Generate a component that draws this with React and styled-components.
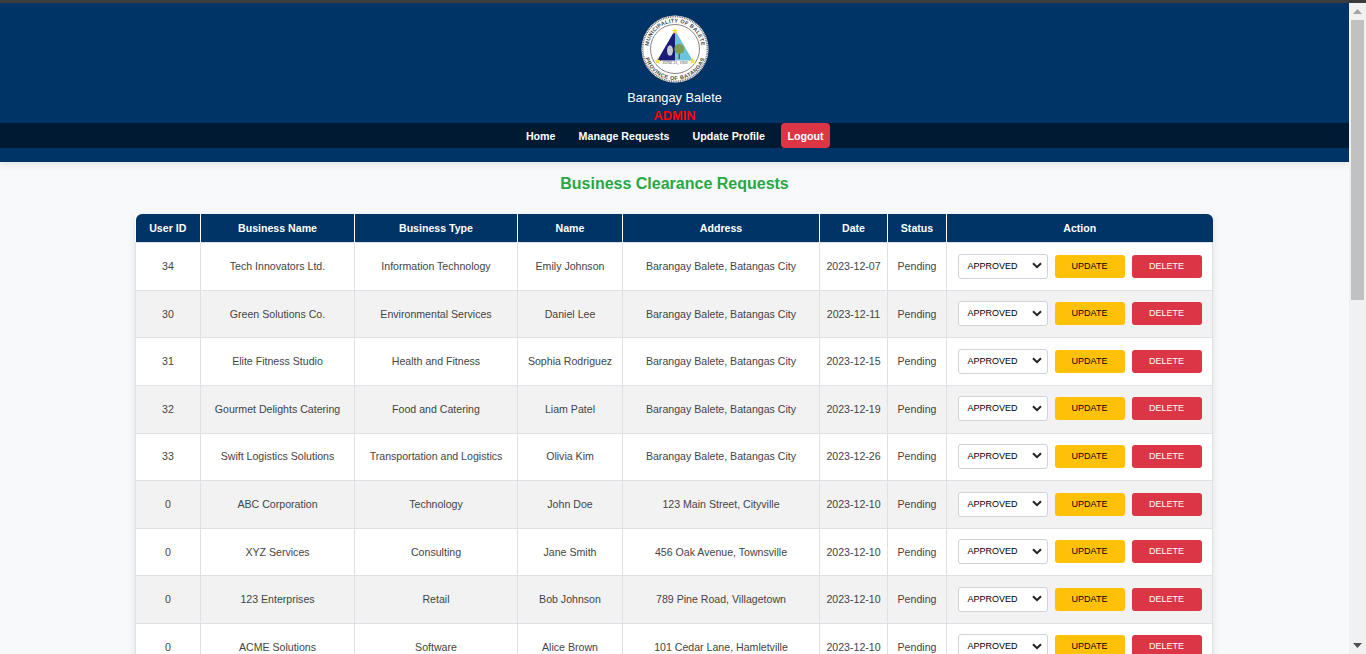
import React from "react";
import styled, { createGlobalStyle } from "styled-components";

const GlobalStyle = createGlobalStyle`
  html, body {
    margin: 0;
    height: 100%;
    overflow: hidden;
    background: #f8f9fa;
    font-family: "Liberation Sans", Arial, sans-serif;
  }
  * { box-sizing: border-box; }
`;

const Shell = styled.div`
  height: 654px;
  display: flex;
  flex-direction: column;
`;

const BrowserLine = styled.div`
  height: 3px;
  flex: none;
  background: #3c3c3c;
`;

const Viewport = styled.div`
  flex: 1;
  display: flex;
  min-height: 0;
`;

const Page = styled.div`
  flex: 1;
  min-width: 0;
  overflow: hidden;
`;

const ScrollTrack = styled.div`
  width: 17px;
  flex: none;
  background: #f1f1f1;
  display: flex;
  flex-direction: column;
  align-items: center;
`;

const ScrollArrow = styled.div`
  height: 17px;
  flex: none;
  display: flex;
  align-items: center;
  justify-content: center;
  margin-top: ${(p) => (p.$end ? "auto" : "0")};
`;

const ScrollThumb = styled.div`
  width: 13px;
  height: 280px;
  background: #c1c1c1;
`;

const Header = styled.header`
  background: #003366;
  height: 159px;
  padding-top: 12px;
  text-align: center;
  color: #fff;
  box-shadow: 0 2px 8px rgba(0, 0, 0, 0.1);
`;

const LogoWrap = styled.div`
  height: 68px;
  display: flex;
  justify-content: center;
`;

const TownName = styled.div`
  margin-top: 7px;
  font-size: 12.8px;
  line-height: 16px;
`;

const RoleName = styled.div`
  margin-top: 3px;
  font-size: 12.8px;
  line-height: 14px;
  font-weight: 700;
  color: #ff0000;
`;

const Nav = styled.nav`
  height: 25px;
  background: #001a33;
  display: flex;
  justify-content: center;
  align-items: center;
  gap: 23px;
  padding-left: 7px;
`;

const NavLink = styled.a`
  font-size: 10.7px;
  font-weight: 700;
  color: #fff;
  text-decoration: none;
`;

const LogoutLink = styled(NavLink)`
  background: #dc3545;
  height: 25px;
  line-height: 26px;
  padding: 0 6.5px;
  border-radius: 4px;
  margin-left: -7px;
`;

const Main = styled.main`
  padding: 0 135px;
`;

const Title = styled.h2`
  margin: 13px 0 21px;
  font-size: 16px;
  line-height: 18px;
  font-weight: 700;
  color: #28a745;
  text-align: center;
`;

const Table = styled.table`
  width: 1077px;
  border-collapse: collapse;
  table-layout: fixed;
  background: #fff;
  font-size: 10.6px;
  color: #444;
  box-shadow: 0 2px 8px rgba(0, 0, 0, 0.1);
`;

const Th = styled.th`
  height: 28.8px;
  padding: 0;
  background: #003366;
  color: #fff;
  font-size: 10.6px;
  font-weight: 700;
  text-align: center;
  border-left: 1px solid #fff;
  &:first-child { border-left: 0; border-top-left-radius: 6px; }
  &:last-child { border-top-right-radius: 6px; }
`;

const Row = styled.tr`
  height: 47.6px;
  background: ${(p) => (p.$odd ? "#f2f2f2" : "#fff")};
`;

const Td = styled.td`
  padding: 0 0 1px;
  text-align: center;
  border: 1px solid #dee2e6;
`;

const Actions = styled.div`
  display: flex;
  align-items: center;
  justify-content: center;
  gap: 7px;
`;

const StatusSelect = styled.div`
  width: 90px;
  height: 25px;
  background: #fff;
  border: 1px solid #ced4da;
  border-radius: 3px;
  padding: 0 5px 1px 9px;
  display: flex;
  align-items: center;
  justify-content: space-between;
  font-size: 9px;
  color: #000;
`;

const ActionButton = styled.button`
  width: 70px;
  height: 23px;
  padding: 0 0 1px;
  border: 0;
  border-radius: 3px;
  font-family: inherit;
  font-size: 9px;
  background: ${(p) => (p.$danger ? "#dc3545" : "#ffc107")};
  color: ${(p) => (p.$danger ? "#fff" : "#000")};
`;

const requests = [
  [34, "Tech Innovators Ltd.", "Information Technology", "Emily Johnson", "Barangay Balete, Batangas City", "2023-12-07"],
  [30, "Green Solutions Co.", "Environmental Services", "Daniel Lee", "Barangay Balete, Batangas City", "2023-12-11"],
  [31, "Elite Fitness Studio", "Health and Fitness", "Sophia Rodriguez", "Barangay Balete, Batangas City", "2023-12-15"],
  [32, "Gourmet Delights Catering", "Food and Catering", "Liam Patel", "Barangay Balete, Batangas City", "2023-12-19"],
  [33, "Swift Logistics Solutions", "Transportation and Logistics", "Olivia Kim", "Barangay Balete, Batangas City", "2023-12-26"],
  [0, "ABC Corporation", "Technology", "John Doe", "123 Main Street, Cityville", "2023-12-10"],
  [0, "XYZ Services", "Consulting", "Jane Smith", "456 Oak Avenue, Townsville", "2023-12-10"],
  [0, "123 Enterprises", "Retail", "Bob Johnson", "789 Pine Road, Villagetown", "2023-12-10"],
  [0, "ACME Solutions", "Software", "Alice Brown", "101 Cedar Lane, Hamletville", "2023-12-10"],
];

const columns = [
  ["User ID", 65],
  ["Business Name", 154],
  ["Business Type", 163],
  ["Name", 105],
  ["Address", 197],
  ["Date", 68],
  ["Status", 59],
  ["Action", 266],
];

function Seal() {
  return (
    <svg width="68" height="68" viewBox="0 0 68 68">
      <defs>
        <path id="sealTop" d="M34 60.5a26.5 26.5 0 1 1 0-53a26.5 26.5 0 1 1 0 53" />
        <path id="sealBottom" d="M34 3a31 31 0 0 0 0 62a31 31 0 0 0 0-62" />
      </defs>
      <circle cx="34" cy="34" r="33.5" fill="#fff" />
      <circle cx="34" cy="34" r="32.5" fill="none" stroke="#777" strokeWidth="2" strokeDasharray="1 0.8" />
      <circle cx="34" cy="34" r="24.5" fill="#fff" stroke="#666" strokeWidth="0.8" />
      <text fontSize="5.4" fontFamily="Liberation Sans" fontWeight="700" fill="#444" letterSpacing="0.3">
        <textPath href="#sealTop" startOffset="50%" textAnchor="middle">MUNICIPALITY OF BALETE</textPath>
      </text>
      <text fontSize="5.4" fontFamily="Liberation Sans" fontWeight="700" fill="#444" letterSpacing="0.5">
        <textPath href="#sealBottom" startOffset="50%" textAnchor="middle">PROVINCE OF BATANGAS</textPath>
      </text>
      <path d="M34 15 16 46h18z" fill="#1b1b78" />
      <path d="M34 15 52 46H34z" fill="#6cc4dc" />
      <ellipse cx="29" cy="35.5" rx="3" ry="5.2" fill="#c9c9d8" />
      <rect x="37.6" y="36" width="1.4" height="8" fill="#6b5a35" />
      <circle cx="38.3" cy="34" r="5" fill="#7d9c55" />
      <rect x="20" y="45.5" width="28" height="4" fill="#fff" />
      <text x="34" y="48.8" fontSize="4" fontFamily="Liberation Serif" fill="#333" textAnchor="middle">JUNE 21, 1969</text>
      <path d="M34 12.5l1 2.4 2.5.1-2 1.6.7 2.5-2.2-1.4-2.2 1.4.7-2.5-2-1.6 2.5-.1zM16.5 42.5l1 2.4 2.5.1-2 1.6.7 2.5-2.2-1.4-2.2 1.4.7-2.5-2-1.6 2.5-.1zM51.5 42.5l1 2.4 2.5.1-2 1.6.7 2.5-2.2-1.4-2.2 1.4.7-2.5-2-1.6 2.5-.1z" fill="#f4e04d" />
    </svg>
  );
}

export default function App() {
  return (
    <Shell>
      <GlobalStyle />
      <BrowserLine />
      <Viewport>
        <Page>
          <Header>
            <LogoWrap>
              <Seal />
            </LogoWrap>
            <TownName>Barangay Balete</TownName>
            <RoleName>ADMIN</RoleName>
            <Nav>
              <NavLink href="#">Home</NavLink>
              <NavLink href="#">Manage Requests</NavLink>
              <NavLink href="#">Update Profile</NavLink>
              <LogoutLink href="#">Logout</LogoutLink>
            </Nav>
          </Header>
          <Main>
            <Title>Business Clearance Requests</Title>
            <Table>
              <colgroup>
                {columns.map(([label, width]) => (
                  <col key={label} width={width} />
                ))}
              </colgroup>
              <thead>
                <tr>
                  {columns.map(([label]) => (
                    <Th key={label}>{label}</Th>
                  ))}
                </tr>
              </thead>
              <tbody>
                {requests.map((r, i) => (
                  <Row key={r[1]} $odd={i % 2 === 1}>
                    {r.map((v, j) => (
                      <Td key={j}>{v}</Td>
                    ))}
                    <Td>Pending</Td>
                    <Td>
                      <Actions>
                        <StatusSelect>
                          APPROVED
                          <svg width="10" height="7" viewBox="0 0 10 7">
                            <path d="M1 1.2 5 5.2 9 1.2" fill="none" stroke="#222" strokeWidth="2" />
                          </svg>
                        </StatusSelect>
                        <ActionButton>UPDATE</ActionButton>
                        <ActionButton $danger>DELETE</ActionButton>
                      </Actions>
                    </Td>
                  </Row>
                ))}
              </tbody>
            </Table>
          </Main>
        </Page>
        <ScrollTrack>
          <ScrollArrow>
            <svg width="9" height="5" viewBox="0 0 9 5"><path d="M4.5 0 9 5H0z" fill="#a3a3a3" /></svg>
          </ScrollArrow>
          <ScrollThumb />
          <ScrollArrow $end>
            <svg width="9" height="5" viewBox="0 0 9 5"><path d="M0 0h9L4.5 5z" fill="#505050" /></svg>
          </ScrollArrow>
        </ScrollTrack>
      </Viewport>
    </Shell>
  );
}
